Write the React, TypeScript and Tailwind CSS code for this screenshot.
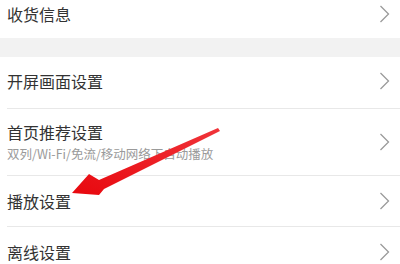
const FONT = { fontFamily: '"Noto Sans CJK SC", "Noto Sans", sans-serif' }

function Chevron() {
  return (
    <svg width="11" height="18" viewBox="0 0 11 18" className="shrink-0">
      <polyline points="1.5,1 9.5,9 1.5,17" fill="none" stroke="#9a9a9a" strokeWidth="1.3" />
    </svg>
  )
}

function Row({ title, sub, className }: { title: string; sub?: string; className: string }) {
  return (
    <div className={`flex items-center justify-between pl-[7px] pr-[10px] ${className}`}>
      <div className="flex flex-col">
        <span className="text-[16px] leading-[22px] text-[#333]">{title}</span>
        {sub && <span className="text-[12.5px] leading-[18px] text-[#9a9a9a] mt-[2px]">{sub}</span>}
      </div>
      <Chevron />
    </div>
  )
}

function Divider() {
  return <div className="ml-[7px] h-px bg-[#e8e8e8]" />
}

export default function App() {
  return (
    <div className="relative w-[400px] h-[264px] overflow-hidden bg-white" style={FONT}>
      <Row title="收货信息" className="h-[38px] pb-[10px]" />
      <div className="h-[19px] bg-[#f2f2f2]" />
      <Row title="开屏画面设置" className="h-[51px] pb-[3px]" />
      <Divider />
      <Row title="首页推荐设置" sub="双列/Wi-Fi/免流/移动网络下自动播放" className="h-[66px]" />
      <Divider />
      <Row title="播放设置" className="h-[50px]" />
      <Divider />
      <Row title="离线设置" className="h-[50px]" />

      <svg className="absolute inset-0 pointer-events-none" width="400" height="264" viewBox="0 0 400 264">
        <defs>
          <linearGradient id="ar" x1="0" y1="1" x2="1" y2="0">
            <stop offset="0" stopColor="#e8080e" />
            <stop offset="1" stopColor="#f0343a" />
          </linearGradient>
        </defs>
        <polygon
          points="72,193 89,174 99,180 218,128 220,131 104,189 99,195"
          fill="url(#ar)"
        />
      </svg>
    </div>
  )
}
